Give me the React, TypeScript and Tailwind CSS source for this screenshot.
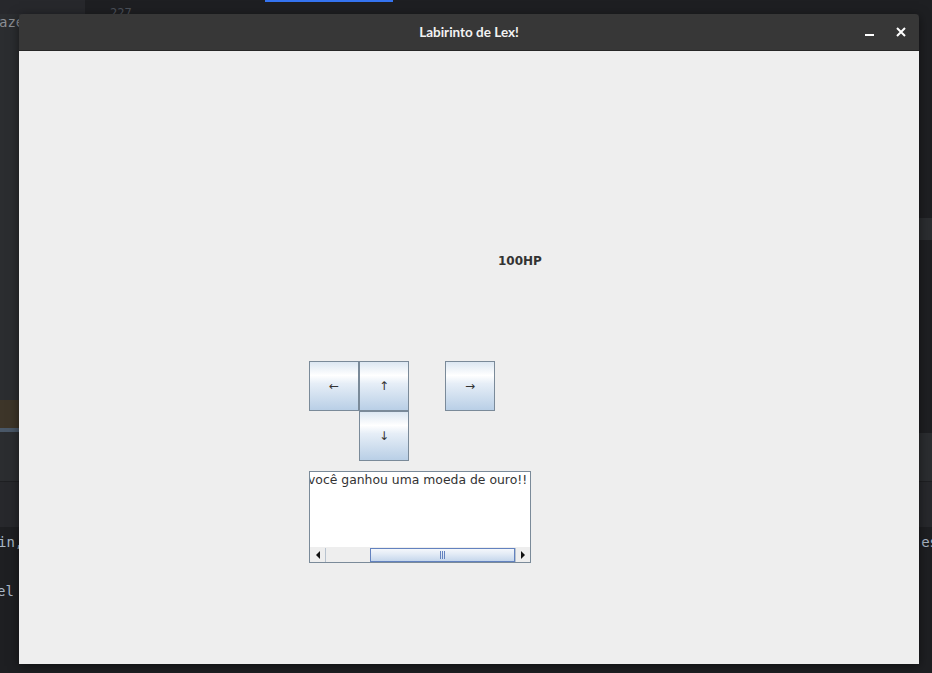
import React from 'react';

const dialog = { fontFamily: '"DejaVu Sans", "Liberation Sans", sans-serif' };
const mono = { fontFamily: '"DejaVu Sans Mono", "Liberation Mono", monospace' };

const ArrowButton: React.FC<{ label: string; className?: string }> = ({ label, className = '' }) => (
    <button
        className={`w-[50px] h-[50px] border border-[#7a8a99] flex items-center justify-center text-[12px] text-[#333333] bg-[linear-gradient(to_bottom,#dce7f2_0%,#ffffff_28%,#e6eef7_45%,#b9cfe6_100%)] ${className}`}
        style={dialog}
    >
        {label}
    </button>
);

const ScrollBar: React.FC = () => (
    <div className="h-[15px] flex border-t border-[#eeeeee] bg-[#eeeeee]">
        <div className="w-[16px] flex items-center justify-center border-r border-[#b8c3cf]">
            <div className="w-0 h-0 border-y-[4px] border-y-transparent border-r-[4px] border-r-[#111111]" />
        </div>
        <div className="w-[44px]" />
        <div className="flex-1 border border-[#6382bf] flex items-center justify-center gap-[1px] bg-[linear-gradient(to_bottom,#f4f7fb_0%,#e4ecf6_40%,#c6d7ec_100%)]">
            <div className="w-[1px] h-[8px] bg-[#6382bf]" />
            <div className="w-[1px] h-[8px] bg-[#6382bf]" />
            <div className="w-[1px] h-[8px] bg-[#6382bf]" />
        </div>
        <div className="w-[15px] flex items-center justify-center border-l border-[#b8c3cf]">
            <div className="w-0 h-0 border-y-[4px] border-y-transparent border-l-[4px] border-l-[#111111]" />
        </div>
    </div>
);

const GameWindow: React.FC = () => (
    <div className="absolute left-[19px] top-[14px] w-[900px] h-[650px] flex flex-col shadow-[0_2px_10px_rgba(0,0,0,0.5)]">
        {/* title bar */}
        <div className="h-[37px] bg-[#373737] rounded-t-[4px] border-b border-[#262626] flex items-center relative">
            <div className="flex-1 text-center text-[#f2f2f2] text-[13.5px] font-bold" style={{ fontFamily: 'Lato, "Noto Sans", sans-serif' }}>
                Labirinto de Lex!
            </div>
            <div className="absolute right-[13px] top-0 h-full flex items-center gap-[22px]">
                <div className="w-[9px] h-[2px] bg-white mt-[6px]" />
                <svg width="10" height="10" viewBox="0 0 10 10">
                    <path d="M1 1 L9 9 M9 1 L1 9" stroke="#ffffff" strokeWidth="2" />
                </svg>
            </div>
        </div>

        {/* content pane */}
        <div className="flex-1 bg-[#eeeeee] flex flex-col">
            <div className="ml-[479px] mt-[203px] h-[14px] leading-[14px] text-[12px] font-bold text-[#333333]" style={dialog}>
                100HP
            </div>

            <div className="ml-[290px] mt-[93px] grid grid-cols-[50px_50px_36px_50px] grid-rows-[50px_50px] w-fit">
                <ArrowButton label="←" />
                <ArrowButton label="↑" />
                <div />
                <ArrowButton label="→" />
                <div />
                <ArrowButton label="↓" />
            </div>

            <div className="ml-[290px] mt-[10px] w-[222px] h-[92px] border border-[#7a8a99] bg-white flex flex-col">
                <div className="flex-1 overflow-hidden">
                    <div className="-ml-[2px] text-[12.4px] leading-[16px] text-[#333333] whitespace-nowrap" style={dialog}>
                        você ganhou uma moeda de ouro!!
                    </div>
                </div>
                <ScrollBar />
            </div>
        </div>
    </div>
);

export default function App() {
    return (
        <div className="relative w-[932px] h-[673px] overflow-hidden bg-[#1e1f22]">
            {/* IDE behind the window */}
            <div className="flex flex-col h-full">
                <div className="h-[14px] flex">
                    <div className="w-[85px] bg-[#27282c]" />
                    <div className="w-[180px] bg-[#1e1f22] text-[#4b5059] text-[12px] pl-[25px] leading-[26px]" style={mono}>227</div>
                    <div className="w-[128px] border-t-2 border-[#3574f0]" />
                    <div className="flex-1" />
                </div>
                <div className="flex-1 flex">
                    <div className="w-[466px] flex flex-col">
                        <div className="h-[386px] bg-[#2b2d30] text-[#8c8f94] text-[14px] leading-[16px]" style={mono}>
                            <div className="mt-[0px] -ml-[1px]">aze</div>
                        </div>
                        <div className="h-[28px] bg-[#3d3529]" />
                        <div className="h-[4px] bg-[#4a5868]" />
                        <div className="h-[49px] bg-[#2b2d30]" />
                        <div className="h-[46px] bg-[#27282c] border-t border-[#1e1f22]" />
                        <div className="flex-1 bg-[#1e1f22] text-[#a9b7c6] text-[14px]" style={mono}>
                            <div className="-ml-[2px] mt-[5px]">in,</div>
                            <div className="-ml-[3px] mt-[28px]">el</div>
                        </div>
                    </div>
                    <div className="flex-1 flex flex-col">
                        <div className="h-[204px] bg-[#1e1f22]" />
                        <div className="h-[22px] bg-[#2b2d30]" />
                        <div className="h-[193px] bg-[#1e1f22]" />
                        <div className="h-[48px] bg-[#2b2d30]" />
                        <div className="h-[46px] bg-[#27282c] border-t border-[#1e1f22]" />
                        <div className="flex-1 bg-[#1e1f22] text-[#a9b7c6] text-[14px] flex justify-end" style={mono}>
                            <div className="mt-[5px] -mr-[6px]">es</div>
                        </div>
                    </div>
                </div>
            </div>

            <GameWindow />
        </div>
    );
}
